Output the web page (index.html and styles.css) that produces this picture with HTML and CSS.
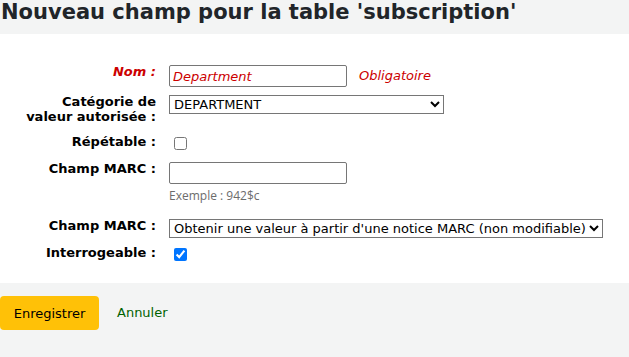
FILE: index.html
```html
<!DOCTYPE html>
<html lang="fr">
<head>
<meta charset="utf-8">
<title>Nouveau champ</title>
<link rel="stylesheet" href="styles.css">
</head>
<body>
<h1 class="page-title">Nouveau champ pour la table 'subscription'</h1>
<form class="field-form">
  <ol class="rows">
    <li class="row row-name">
      <label class="row-label required" for="name">Nom :</label>
      <div class="control">
        <input class="text-input required-input" id="name" type="text" value="Department">
        <span class="required-note">Obligatoire</span>
      </div>
    </li>
    <li class="row row-cat">
      <label class="row-label" for="cat">Catégorie de valeur autorisée :</label>
      <div class="control">
        <select class="select select-cat" id="cat"><option>DEPARTMENT</option></select>
      </div>
    </li>
    <li class="row row-rep">
      <label class="row-label" for="rep">Répétable :</label>
      <div class="control">
        <input class="check" id="rep" type="checkbox">
      </div>
    </li>
    <li class="row row-marc">
      <label class="row-label" for="marc">Champ MARC :</label>
      <div class="control control-col">
        <input class="text-input" id="marc" type="text">
        <div class="hint">Exemple : 942$c</div>
      </div>
    </li>
    <li class="row row-marc2">
      <label class="row-label" for="marc2">Champ MARC :</label>
      <div class="control">
        <select class="select" id="marc2"><option>Obtenir une valeur à partir d'une notice MARC (non modifiable)</option></select>
      </div>
    </li>
    <li class="row row-search">
      <label class="row-label" for="search">Interrogeable :</label>
      <div class="control">
        <input class="check" id="search" type="checkbox" checked>
      </div>
    </li>
  </ol>
  <div class="actions">
    <button class="btn-save" type="button">Enregistrer</button>
    <a class="cancel" href="#">Annuler</a>
  </div>
</form>
</body>
</html>
```
FILE: styles.css
```css
html, body {
  margin: 0;
  padding: 0;
  background: #ffffff;
  font-family: "DejaVu Sans", sans-serif;
  color: #000;
}
.page-title {
  margin: 0;
  height: 34px;
  padding: 0 0 0 1px;
  background: #f3f4f4;
  font-size: 21px;
  line-height: 24px;
  font-weight: bold;
  color: #212529;
  overflow: hidden;
}
.field-form {
  margin: 0;
}
.rows {
  list-style: none;
  margin: 0;
  padding: 30px 0 19px 0;
}
.row {
  display: flex;
  align-items: flex-start;
  padding-bottom: 8px;
}
.row-name {
  padding-bottom: 7px;
}
.row-cat {
  padding-bottom: 10px;
}
.row-rep {
  padding-bottom: 8px;
}
.row-marc {
  padding-bottom: 13px;
}
.row-marc2 {
  padding-bottom: 7px;
}
.row-search {
  padding-bottom: 0;
}
.row-label {
  width: 157px;
  flex: none;
  box-sizing: border-box;
  padding-right: 1px;
  text-align: right;
  font-size: 13px;
  line-height: 15px;
  font-weight: bold;
  color: #000;
}
.row-label.required {
  color: #cc0000;
  font-style: italic;
}
.row-cat .row-label {
  padding-left: 20px;
}
.control {
  margin-left: 12px;
  display: flex;
  align-items: center;
}
.control-col {
  flex-direction: column;
  align-items: flex-start;
}
.text-input {
  box-sizing: border-box;
  width: 178px;
  height: 22px;
  margin: 1px 0 0 0;
  padding: 1px 3px;
  border: 1px solid #767676;
  border-radius: 2px;
  font-family: "DejaVu Sans", sans-serif;
  font-size: 13px;
  color: #000;
  background: #fff;
}
.required-input {
  color: #cc0000;
  font-style: italic;
}
.required-note {
  margin-left: 12px;
  color: #cc0000;
  font-style: italic;
  font-size: 13px;
}
.select {
  box-sizing: border-box;
  height: 19px;
  margin: 1px 0 0 0;
  border: 1px solid #767676;
  border-radius: 0;
  font-family: "DejaVu Sans", sans-serif;
  font-size: 13px;
  color: #000;
  background: #fff;
}
.select-cat {
  width: 275px;
}
.check {
  margin: 3px 3px 3px 5px;
  width: 13px;
  height: 13px;
}
.hint {
  margin-top: 3px;
  font-family: "Open Sans", sans-serif;
  font-size: 12px;
  line-height: 18px;
  color: #6c6c6c;
}
.actions {
  background: #f3f4f4;
  height: 74px;
  display: flex;
  align-items: flex-start;
  padding-top: 13px;
  box-sizing: border-box;
}
.btn-save {
  width: 99px;
  height: 34px;
  border: none;
  border-radius: 4px;
  background: #ffc107;
  font-family: "DejaVu Sans", sans-serif;
  font-size: 13px;
  color: #000;
  padding: 0;
}
.cancel {
  margin-left: 18px;
  line-height: 34px;
  font-size: 13px;
  color: #006100;
  text-decoration: none;
}
```
